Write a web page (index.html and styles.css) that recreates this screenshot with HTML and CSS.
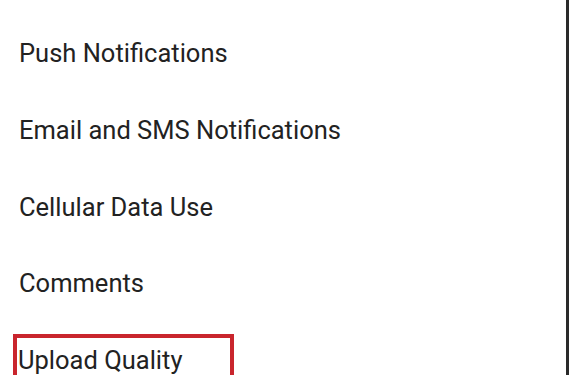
FILE: index.html
```html
<!DOCTYPE html>
<html>
<head>
<meta charset="utf-8">
<link rel="stylesheet" href="styles.css">
</head>
<body>
<div class="screen">
  <ul class="settings">
    <li class="row">Push Notifications</li>
    <li class="row">Email and SMS Notifications</li>
    <li class="row">Cellular Data Use</li>
    <li class="row">Comments</li>
    <li class="row row-highlight">Upload Quality</li>
  </ul>
</div>
</body>
</html>
```
FILE: styles.css
```css
html, body {
  margin: 0;
  padding: 0;
  background: #ffffff;
  overflow: hidden;
}
.screen {
  box-sizing: border-box;
  width: 569px;
  height: 375px;
  border-right: 3px solid #2a2a2a;
  background: #ffffff;
  overflow: hidden;
}
.settings {
  list-style: none;
  margin: 0;
  padding: 27px 0 0 19px;
  font-family: Roboto, "Noto Sans", sans-serif;
  font-size: 25.5px;
  line-height: 28px;
  color: #222222;
}
.row {
  box-sizing: border-box;
  height: 76.75px;
  padding-top: 12px;
}
.row-highlight {
  width: 221px;
  height: 70px;
  margin-left: -6px;
  border: 4px solid #c9252d;
  padding: 8px 0 0 1px;
}
```
